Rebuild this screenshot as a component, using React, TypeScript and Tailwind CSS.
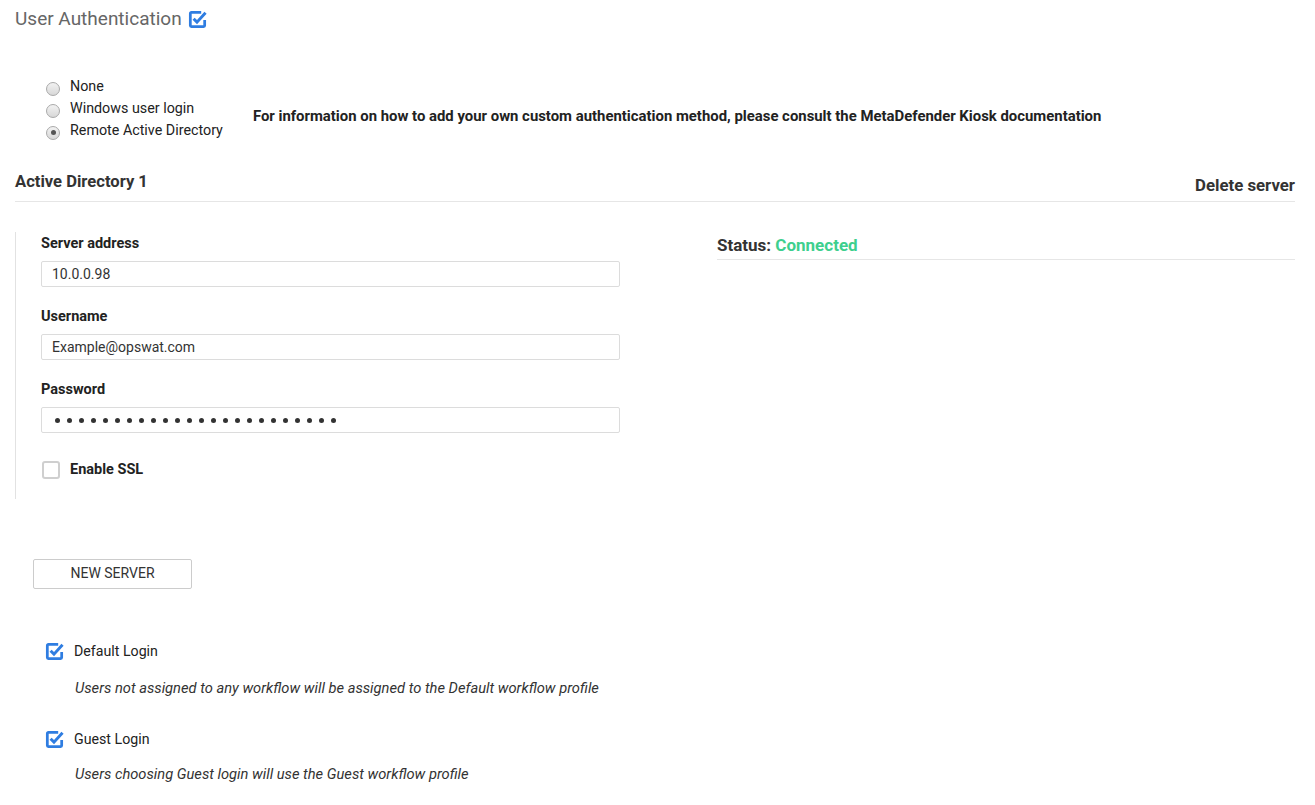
import React from 'react';

function BlueCheck({ size = 19 }: { size?: number }) {
  return (
    <svg width={size} height={size} viewBox="0 0 18 18" className="shrink-0">
      <path d="M12.5 2.2H3.2a1 1 0 0 0-1 1v11.6a1 1 0 0 0 1 1h11.6a1 1 0 0 0 1-1V9.5" fill="none" stroke="#2f7de1" strokeWidth="2.6" />
      <path d="M5.3 8.2l3.2 3.3L16.6 2.6" fill="none" stroke="#2f7de1" strokeWidth="2.8" />
    </svg>
  );
}

function Radio({ checked, label }: { checked?: boolean; label: string }) {
  return (
    <div className="flex items-center h-[22px]">
      <span className="w-[14px] h-[14px] rounded-full border border-[#a9a9a9] bg-gradient-to-b from-[#f2f2f2] to-[#d8d8d8] flex items-center justify-center ml-[46px] mr-[10px] mt-[3px]">
        {checked && <span className="w-[5px] h-[5px] rounded-full bg-[#555]" />}
      </span>
      <span className="text-[14.3px] text-[#222]">{label}</span>
    </div>
  );
}

function Field({ label, value, dots }: { label: string; value: string; dots?: boolean }) {
  return (
    <div className="flex flex-col">
      <div className="text-[14.5px] font-bold text-[#222] h-[20px] leading-[20px]">{label}</div>
      <div className="mt-[7px] w-[579px] h-[26px] border border-[#dcdcdc] rounded-[2px] flex items-center pl-[10px] text-[14px] text-[#333]">
        {dots ? (
          <span className="flex gap-[7px] pl-[3px]">
            {Array.from({ length: 24 }).map((_, i) => (
              <span key={i} className="w-[5px] h-[5px] rounded-full bg-[#333]" />
            ))}
          </span>
        ) : (
          value
        )}
      </div>
    </div>
  );
}

export default function App() {
  return (
    <div className="w-[1315px] h-[805px] bg-white font-['Roboto',sans-serif] text-[#222] overflow-hidden">
      <div className="flex items-center gap-[6px] pl-[15px] pt-[9px] h-[29px]">
        <span className="text-[19px] text-[#666] leading-[26px]">User Authentication</span>
        <BlueCheck />
      </div>

      <div className="flex items-center mt-[47px]">
        <div className="flex flex-col">
          <Radio label="None" />
          <Radio label="Windows user login" />
          <Radio checked label="Remote Active Directory" />
        </div>
        <div className="ml-[30px] mt-[14px] text-[14.9px] font-bold text-[#222]">
          For information on how to add your own custom authentication method, please consult the MetaDefender Kiosk documentation
        </div>
      </div>

      <div className="ml-[15px] mr-[20px] mt-[32px] border-b border-[#e6e6e6] flex items-end justify-between h-[28px] pb-[6px]">
        <span className="text-[16.6px] font-bold text-[#333] leading-[20px] mb-[3px]">Active Directory 1</span>
        <span className="text-[16.8px] font-bold text-[#333] leading-[20px]">Delete server</span>
      </div>

      <div className="flex mt-[30px] ml-[15px] mr-[20px]">
        <div className="border-l border-[#e2e2e2] pl-[25px] pt-[2px] pb-[18px] flex flex-col gap-[21px] w-[680px]">
          <Field label="Server address" value="10.0.0.98" />
          <div className="-mt-[1px]"><Field label="Username" value="Example@opswat.com" /></div>
          <div className="-mt-[1px]"><Field label="Password" value="" dots /></div>
          <div className="flex items-center gap-[10px] mt-[5px] ml-[1px]">
            <span className="w-[18px] h-[18px] border-2 border-[#cfcfcf] rounded-[3px]" />
            <span className="text-[14.5px] font-bold text-[#222]">Enable SSL</span>
          </div>
        </div>
        <div className="ml-[22px] flex-1">
          <div className="border-b border-[#e6e6e6] h-[28px] pt-[3px] text-[17px] font-bold text-[#333] leading-[20px]">
            Status: <span className="text-[#3ecf8e]">Connected</span>
          </div>
        </div>
      </div>

      <div className="ml-[33px] mt-[60px] w-[159px] h-[30px] border border-[#cccccc] rounded-[2px] flex items-center justify-center text-[14px] text-[#333]">
        NEW SERVER
      </div>

      <div className="ml-[45px] mt-[53px] flex flex-col">
        <div className="flex items-center gap-[10px] h-[20px]">
          <BlueCheck />
          <span className="text-[14.2px] text-[#222]">Default Login</span>
        </div>
        <div className="ml-[30px] mt-[15px] text-[14.7px] italic text-[#333]">
          Users not assigned to any workflow will be assigned to the Default workflow profile
        </div>
        <div className="flex items-center gap-[10px] h-[20px] mt-[31px]">
          <BlueCheck />
          <span className="text-[14.2px] text-[#222]">Guest Login</span>
        </div>
        <div className="ml-[30px] mt-[13px] text-[14.7px] italic text-[#333]">
          Users choosing Guest login will use the Guest workflow profile
        </div>
      </div>
    </div>
  );
}
